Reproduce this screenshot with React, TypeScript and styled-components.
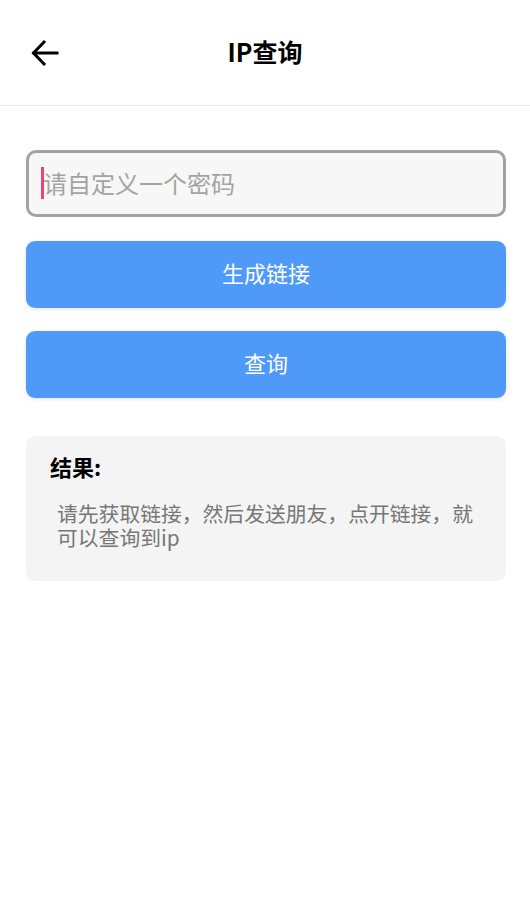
import React, { useState } from "react";
import styled, { createGlobalStyle } from "styled-components";

const GlobalStyle = createGlobalStyle`
    html, body {
        margin: 0;
        padding: 0;
        background: #ffffff;
        font-family: "Noto Sans CJK SC", "Noto Sans", sans-serif;
    }
    * {
        box-sizing: border-box;
    }
`;

const Page = styled.div`
    width: 530px;
    min-height: 920px;
    background: #ffffff;
`;

const Header = styled.header`
    height: 106px;
    display: grid;
    grid-template-columns: 80px 1fr 80px;
    align-items: center;
    border-bottom: 1px solid #ececec;
`;

const BackButton = styled.button`
    border: none;
    background: none;
    padding: 0;
    margin-left: 30px;
    width: 30px;
    height: 30px;
    display: flex;
    align-items: center;
    justify-content: center;
    color: #000;
    cursor: pointer;
`;

const Title = styled.h1`
    margin: 0;
    padding-bottom: 4px;
    text-align: center;
    font-size: 25px;
    font-weight: 700;
    color: #000;
`;

const Body = styled.main`
    padding: 44px 24px 0 26px;
    display: flex;
    flex-direction: column;
`;

const InputWrap = styled.div`
    position: relative;
    width: 480px;
`;

const InputBox = styled.input`
    width: 480px;
    height: 67px;
    border: 3px solid #a2a2a2;
    border-radius: 10px;
    background: #f7f7f7;
    padding: 0 14px 2px;
    font-family: inherit;
    font-size: 24px;
    color: #333;
    caret-color: #e0407a;
    outline: none;
    &::placeholder {
        color: #a3a3a3;
    }
`;

const Caret = styled.span`
    position: absolute;
    left: 15px;
    top: 17px;
    width: 3px;
    height: 32px;
    background: #e8457e;
`;

const PrimaryButton = styled.button<{ $top: number }>`
    width: 480px;
    height: 67px;
    margin-top: ${p => p.$top}px;
    padding: 0 0 5px;
    border: none;
    border-radius: 9px;
    background: #4f9af8;
    color: #ffffff;
    font-family: inherit;
    font-size: 22px;
    box-shadow: 0 1px 4px rgba(0, 0, 0, 0.12);
    cursor: pointer;
`;

const ResultCard = styled.section`
    width: 480px;
    margin-top: 38px;
    background: #f4f4f4;
    border-radius: 9px;
    padding: 14px 24px 32px 24px;
`;

const ResultTitle = styled.h3`
    margin: 0;
    font-size: 22px;
    font-weight: 700;
    color: #000;
    line-height: 32px;
`;

const ResultText = styled.p`
    margin: 19px 0 0 7px;
    font-size: 20.8px;
    line-height: 24px;
    color: #777777;
`;

const ArrowLeft = () => (
    <svg width="30" height="30" viewBox="0 0 30 30" fill="none" stroke="currentColor" strokeWidth="3" strokeLinecap="square" strokeLinejoin="miter">
        <path d="M27 15 H4" />
        <path d="M14 4 L3.5 15 L14 26" />
    </svg>
);

const App = () => {
    const [pwd, setPwd] = useState("");

    return (
        <Page>
            <GlobalStyle />
            <Header>
                <BackButton aria-label="返回"><ArrowLeft /></BackButton>
                <Title>IP查询</Title>
                <div />
            </Header>
            <Body>
                <InputWrap>
                    <InputBox value={pwd} onChange={e => setPwd(e.target.value)} placeholder="请自定义一个密码" />
                    {pwd === "" && <Caret />}
                </InputWrap>
                <PrimaryButton $top={24}>生成链接</PrimaryButton>
                <PrimaryButton $top={23}>查询</PrimaryButton>
                <ResultCard>
                    <ResultTitle>结果:</ResultTitle>
                    <ResultText>请先获取链接，然后发送朋友，点开链接，就可以查询到ip</ResultText>
                </ResultCard>
            </Body>
        </Page>
    );
};

export default App;
